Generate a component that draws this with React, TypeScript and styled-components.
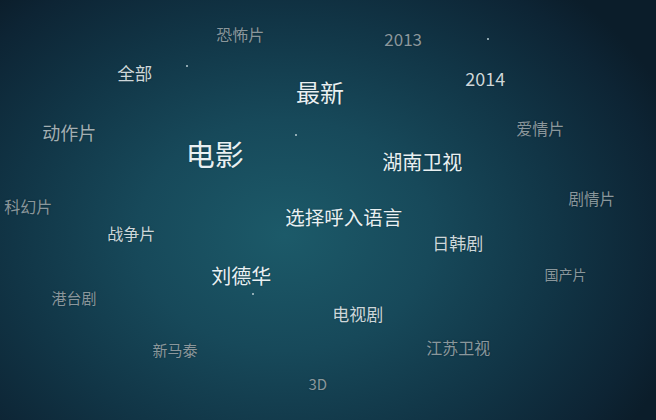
import React from "react";
import styled, { createGlobalStyle } from "styled-components";

type Tone = "bright" | "light" | "muted" | "dim";

interface IWord {
  text: string;
  x: number;
  y: number;
  size: number;
  tone: Tone;
}

interface IStar {
  x: number;
  y: number;
}

const TONES: Record<Tone, string> = {
  bright: "#e9f0f2",
  light: "#cdd7da",
  muted: "#a3afb3",
  dim: "#8a979c",
};

// x / y are the top-left corner of the glyphs on the canvas
const WORDS: IWord[] = [
  { text: "恐怖片", x: 217, y: 28, size: 16, tone: "dim" },
  { text: "2013", x: 385, y: 32, size: 17, tone: "dim" },
  { text: "全部", x: 118, y: 66, size: 17.5, tone: "light" },
  { text: "最新", x: 297, y: 82, size: 24, tone: "bright" },
  { text: "2014", x: 466, y: 71, size: 18, tone: "light" },
  { text: "动作片", x: 43, y: 125, size: 18, tone: "muted" },
  { text: "爱情片", x: 517, y: 122, size: 16, tone: "dim" },
  { text: "电影", x: 187, y: 142, size: 29, tone: "bright" },
  { text: "湖南卫视", x: 383, y: 154, size: 20, tone: "bright" },
  { text: "科幻片", x: 5, y: 200, size: 16, tone: "dim" },
  { text: "剧情片", x: 569, y: 193, size: 15.5, tone: "dim" },
  { text: "选择呼入语言", x: 286, y: 209, size: 19.5, tone: "bright" },
  { text: "战争片", x: 108, y: 227, size: 16, tone: "light" },
  { text: "日韩剧", x: 433, y: 236, size: 17, tone: "light" },
  { text: "刘德华", x: 212, y: 268, size: 20, tone: "bright" },
  { text: "国产片", x: 545, y: 268, size: 14, tone: "dim" },
  { text: "港台剧", x: 52, y: 291, size: 15, tone: "dim" },
  { text: "电视剧", x: 333, y: 307, size: 17, tone: "light" },
  { text: "新马泰", x: 153, y: 343, size: 15, tone: "dim" },
  { text: "江苏卫视", x: 427, y: 341, size: 16, tone: "dim" },
  { text: "3D", x: 309, y: 377, size: 15, tone: "dim" },
];

const STARS: IStar[] = [
  { x: 186, y: 65 },
  { x: 295, y: 134 },
  { x: 487, y: 38 },
  { x: 252, y: 293 },
];

const GlobalStyle = createGlobalStyle`
  html, body {
    margin: 0;
    padding: 0;
    background: #0c1f2d;
  }
  body {
    font-family: "Noto Sans CJK SC", "Noto Sans", sans-serif;
  }
`;

const Cloud = styled.div`
  position: relative;
  width: 656px;
  height: 420px;
  overflow: hidden;
  background: radial-gradient(
    ellipse 420px 330px at 285px 235px,
    #1c5a69 0%,
    #17495a 35%,
    #113546 65%,
    #0d2434 90%,
    #0b1d2a 100%
  );
`;

// glyph ink sits a little inside the line box, so shift the box back by it
const Word = styled.span<{ $x: number; $y: number; $size: number; $tone: Tone }>`
  position: absolute;
  left: ${(p) => p.$x - p.$size * 0.04}px;
  top: ${(p) => p.$y - p.$size * 0.1}px;
  white-space: nowrap;
  line-height: 1;
  font-size: ${(p) => p.$size}px;
  color: ${(p) => TONES[p.$tone]};
  text-shadow: 0 0 2px rgba(0, 0, 0, 0.25);
  cursor: pointer;
`;

const Star = styled.i<{ $x: number; $y: number }>`
  position: absolute;
  left: ${(p) => p.$x}px;
  top: ${(p) => p.$y}px;
  width: 2px;
  height: 2px;
  border-radius: 50%;
  background: #b9cbd0;
`;

const App = () => {
  return (
    <>
      <GlobalStyle />
      <Cloud>
        {STARS.map((star, index) => (
          <Star key={index} $x={star.x} $y={star.y} />
        ))}
        {WORDS.map((word) => (
          <Word
            key={word.text}
            $x={word.x}
            $y={word.y}
            $size={word.size}
            $tone={word.tone}
          >
            {word.text}
          </Word>
        ))}
      </Cloud>
    </>
  );
};

export default App;
